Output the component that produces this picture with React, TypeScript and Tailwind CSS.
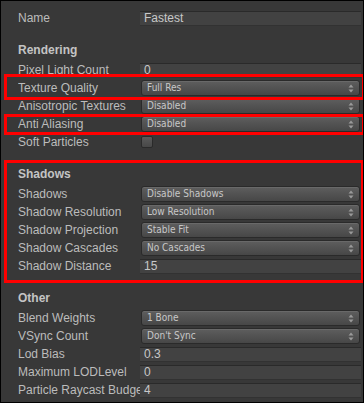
import React from "react";

const font = { fontFamily: '"Liberation Sans", Arial, sans-serif' };

function Label({ children }: { children: React.ReactNode }) {
  return (
    <div className="w-[122px] shrink-0 overflow-hidden whitespace-nowrap text-[12px] leading-[18px] text-[#bcbcbc]">
      {children}
    </div>
  );
}

function Arrows() {
  return (
    <svg width="6" height="9" viewBox="0 0 6 9" className="shrink-0">
      <path d="M3 0.5 L5.5 3.5 L0.5 3.5 Z" fill="#9a9a9a" />
      <path d="M3 8.5 L5.5 5.5 L0.5 5.5 Z" fill="#9a9a9a" />
    </svg>
  );
}

function Dropdown({ value }: { value: string }) {
  return (
    <div className="ml-[1px] mr-[3px] flex h-[16px] flex-1 items-center justify-between rounded-[3px] border border-[#2a2a2a] bg-gradient-to-b from-[#5e5e5e] to-[#474747] pl-[5px] pr-[5px] shadow-[inset_0_1px_0_rgba(255,255,255,0.08)]">
      <span className="text-[10px] leading-[14px] text-[#c8c8c8]" style={{ fontFamily: '"DejaVu Sans Condensed", "DejaVu Sans", sans-serif' }}>
        {value}
      </span>
      <Arrows />
    </div>
  );
}

function Field({ value }: { value: string }) {
  return (
    <div className="mr-[2px] flex h-[15px] flex-1 items-center border-t border-[#2a2a2a] border-b border-b-[#323232] bg-[#424242] pl-[4px] text-[12px] text-[#c8c8c8]">
      {value}
    </div>
  );
}

function Row({ label, children }: { label: string; children?: React.ReactNode }) {
  return (
    <div className="flex h-[18px] items-center pl-[17px]">
      <Label>{label}</Label>
      {children}
    </div>
  );
}

function Header({ children }: { children: React.ReactNode }) {
  return (
    <div className="flex h-[21px] items-center pb-[1px] pl-[17px] text-[12px] font-bold text-[#c4c4c4]">{children}</div>
  );
}

export default function App() {
  return (
    <div className="relative h-[403px] w-[364px] overflow-hidden border border-black bg-[#383838]" style={font}>
      <div className="pt-[8px]">
        <Row label="Name">
          <Field value="Fastest" />
        </Row>
        <div className="h-[13px]" />
        <Header>Rendering</Header>
        <Row label="Pixel Light Count">
          <Field value="0" />
        </Row>
        <Row label="Texture Quality">
          <Dropdown value="Full Res" />
        </Row>
        <Row label="Anisotropic Textures">
          <Dropdown value="Disabled" />
        </Row>
        <Row label="Anti Aliasing">
          <Dropdown value="Disabled" />
        </Row>
        <Row label="Soft Particles">
          <div className="ml-[1px] h-[12px] w-[12px] rounded-[2px] border border-[#2a2a2a] bg-gradient-to-b from-[#5a5a5a] to-[#484848]" />
        </Row>
        <div className="h-[13px]" />
        <Header>Shadows</Header>
        <Row label="Shadows">
          <Dropdown value="Disable Shadows" />
        </Row>
        <Row label="Shadow Resolution">
          <Dropdown value="Low Resolution" />
        </Row>
        <Row label="Shadow Projection">
          <Dropdown value="Stable Fit" />
        </Row>
        <Row label="Shadow Cascades">
          <Dropdown value="No Cascades" />
        </Row>
        <Row label="Shadow Distance">
          <Field value="15" />
        </Row>
        <div className="h-[13px]" />
        <Header>Other</Header>
        <Row label="Blend Weights">
          <Dropdown value="1 Bone" />
        </Row>
        <Row label="VSync Count">
          <Dropdown value="Don't Sync" />
        </Row>
        <Row label="Lod Bias">
          <Field value="0.3" />
        </Row>
        <Row label="Maximum LODLevel">
          <Field value="0" />
        </Row>
        <Row label="Particle Raycast Budget">
          <Field value="4" />
        </Row>
      </div>

      <div className="pointer-events-none absolute left-[3px] top-[73px] h-[26px] w-[361px] border-[3px] border-[#ff0000]" />
      <div className="pointer-events-none absolute left-[3px] top-[113px] h-[21px] w-[361px] border-[3px] border-[#ff0000]" />
      <div className="pointer-events-none absolute left-[3px] top-[159px] h-[123px] w-[360px] border-[3px] border-[#ff0000]" />
    </div>
  );
}
